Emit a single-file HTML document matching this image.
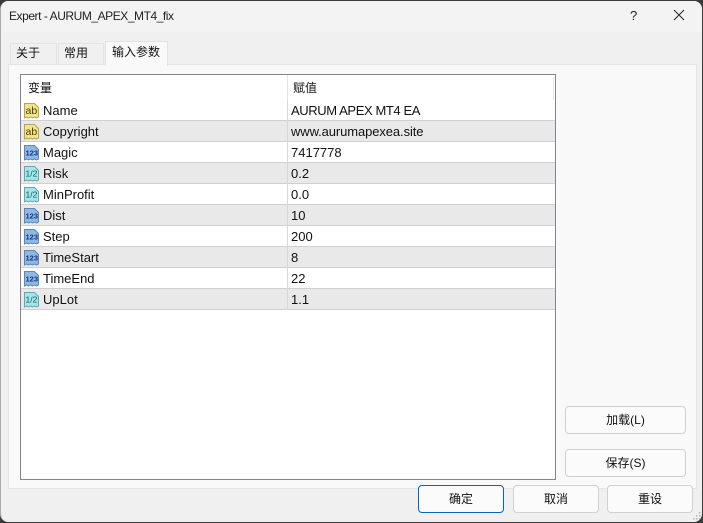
<!DOCTYPE html>
<html><head><meta charset="utf-8"><style>
html,body{margin:0;padding:0;width:703px;height:523px;overflow:hidden;background:#3a3a3a}
*{box-sizing:border-box}
body{font-family:"Liberation Sans","Noto Sans CJK SC",sans-serif;font-size:13px;color:#111;position:relative}
.abs,.win,.tab,.panel,.list,.btn,.row,.t{position:absolute}
.win{left:0;top:1px;width:702px;height:521px;background:#f0f0f0;border-radius:8px;overflow:hidden;border-left:1px solid #aaa}
.title{position:absolute;left:0;top:0;width:702px;height:31px;background:#f3f3f3}
.tab{background:#f0f0f0;border:1px solid #e3e3e3;border-bottom:none;text-align:left;font-size:12px}
.panel{left:8px;top:64px;width:689px;height:425px;background:#f9f9f9;border:1px solid #e5e5e5}
.list{left:20px;top:74px;width:536px;height:406px;background:#fff;border:1px solid #82858f;overflow:hidden}
.row{left:0;width:534px;height:21px;border-bottom:1px solid #d0d0d0;line-height:20px}
.g{background:#e9e9e9}
.row b{font-weight:normal;position:absolute;left:22px;top:1px;font-size:13px}
.row i{font-style:normal;position:absolute;left:270px;top:1px;font-size:13px}
.row u{position:absolute;left:266px;top:0;width:1px;height:21px;background:#d8d8d8}
.row svg{position:absolute;left:2px;top:2px}
.btn{background:#fbfbfb;border:1px solid #d0d0d0;border-radius:4px;text-align:center;font-size:12px;line-height:26px;height:28px}
</style></head><body>
<div style="position:absolute;left:0;top:55px;width:2px;height:9px;background:#35c635"></div>
<div style="position:absolute;left:0;top:70px;width:2px;height:13px;background:#35c635"></div>
<div class="win">
<div class="title"></div>
</div>
<div class="t" style="left:9px;top:9px;font-size:12px;color:#222;letter-spacing:-.45px;white-space:nowrap">Expert - AURUM_APEX_MT4_fix</div>
<svg class="abs" style="left:625px;top:5px" width="70" height="20"><text x="5" y="15" font-family="Liberation Sans" font-size="13" fill="#222">?</text><path d="M49 5l10 10M59 5l-10 10" stroke="#222" stroke-width="1" fill="none"/></svg>

<div class="tab" style="left:10px;top:43px;width:47px;height:22px;line-height:19px;padding-left:5px">关于</div>
<div class="tab" style="left:58px;top:43px;width:46px;height:22px;line-height:19px;padding-left:5px">常用</div>
<div class="panel"></div>
<div class="tab" style="left:105px;top:41px;width:63px;height:25px;line-height:20px;padding-left:6px;background:#f9f9f9;z-index:2">输入参数</div>

<div class="list">
<div class="abs" style="left:7px;top:4px;font-size:12px">变量</div>
<div class="abs" style="left:272px;top:4px;font-size:12px">赋值</div>
<div class="abs" style="left:266px;top:0;width:1px;height:25px;background:#e5e5e5"></div>
<div class="abs" style="left:532px;top:2px;width:1px;height:23px;background:#e5e5e5"></div>

<div class="row" style="top:25px"><svg width="17" height="17"><path d="M1.5 1.5h10l4 4v9.500l-2 1-2-1-2 1-2-1-2 1-2-1-2 1z" fill="#f0e48c" stroke="#b5a550"/><text x="2.500" y="12" font-family="Liberation Sans" font-size="10.500" fill="#4a3c08">ab</text></svg><b>Name</b><u></u><i style="letter-spacing:-.4px">AURUM APEX MT4 EA</i></div>
<div class="row g" style="top:46px"><svg width="17" height="17"><path d="M1.5 1.5h10l4 4v9.500l-2 1-2-1-2 1-2-1-2 1-2-1-2 1z" fill="#f0e48c" stroke="#b5a550"/><text x="2.500" y="12" font-family="Liberation Sans" font-size="10.500" fill="#4a3c08">ab</text></svg><b>Copyright</b><u></u><i style="letter-spacing:-.1px">www.aurumapexea.site</i></div>
<div class="row" style="top:67px"><svg width="17" height="17"><path d="M1.5 1.5h10l4 4v9.500l-2 1-2-1-2 1-2-1-2 1-2-1-2 1z" fill="#90b8e6" stroke="#5d85b8"/><text x="2.500" y="11.500" font-family="Liberation Sans" font-size="7.500" font-weight="bold" fill="#0e3a78">123</text></svg><b>Magic</b><u></u><i>7417778</i></div>
<div class="row g" style="top:88px"><svg width="17" height="17"><path d="M1.5 1.5h10l4 4v9.500l-2 1-2-1-2 1-2-1-2 1-2-1-2 1z" fill="#a5e6e8" stroke="#5faab0"/><text x="2.500" y="11.500" font-family="Liberation Sans" font-size="8.500" fill="#0e5a68">1/2</text></svg><b>Risk</b><u></u><i>0.2</i></div>
<div class="row" style="top:109px"><svg width="17" height="17"><path d="M1.5 1.5h10l4 4v9.500l-2 1-2-1-2 1-2-1-2 1-2-1-2 1z" fill="#a5e6e8" stroke="#5faab0"/><text x="2.500" y="11.500" font-family="Liberation Sans" font-size="8.500" fill="#0e5a68">1/2</text></svg><b>MinProfit</b><u></u><i>0.0</i></div>
<div class="row g" style="top:130px"><svg width="17" height="17"><path d="M1.5 1.5h10l4 4v9.500l-2 1-2-1-2 1-2-1-2 1-2-1-2 1z" fill="#90b8e6" stroke="#5d85b8"/><text x="2.500" y="11.500" font-family="Liberation Sans" font-size="7.500" font-weight="bold" fill="#0e3a78">123</text></svg><b>Dist</b><u></u><i>10</i></div>
<div class="row" style="top:151px"><svg width="17" height="17"><path d="M1.5 1.5h10l4 4v9.500l-2 1-2-1-2 1-2-1-2 1-2-1-2 1z" fill="#90b8e6" stroke="#5d85b8"/><text x="2.500" y="11.500" font-family="Liberation Sans" font-size="7.500" font-weight="bold" fill="#0e3a78">123</text></svg><b>Step</b><u></u><i>200</i></div>
<div class="row g" style="top:172px"><svg width="17" height="17"><path d="M1.5 1.5h10l4 4v9.500l-2 1-2-1-2 1-2-1-2 1-2-1-2 1z" fill="#90b8e6" stroke="#5d85b8"/><text x="2.500" y="11.500" font-family="Liberation Sans" font-size="7.500" font-weight="bold" fill="#0e3a78">123</text></svg><b>TimeStart</b><u></u><i>8</i></div>
<div class="row" style="top:193px"><svg width="17" height="17"><path d="M1.5 1.5h10l4 4v9.500l-2 1-2-1-2 1-2-1-2 1-2-1-2 1z" fill="#90b8e6" stroke="#5d85b8"/><text x="2.500" y="11.500" font-family="Liberation Sans" font-size="7.500" font-weight="bold" fill="#0e3a78">123</text></svg><b>TimeEnd</b><u></u><i>22</i></div>
<div class="row g" style="top:214px"><svg width="17" height="17"><path d="M1.5 1.5h10l4 4v9.500l-2 1-2-1-2 1-2-1-2 1-2-1-2 1z" fill="#a5e6e8" stroke="#5faab0"/><text x="2.500" y="11.500" font-family="Liberation Sans" font-size="8.500" fill="#0e5a68">1/2</text></svg><b>UpLot</b><u></u><i>1.1</i></div>
</div>

<div class="btn" style="left:565px;top:406px;width:121px">加载(L)</div>
<div class="btn" style="left:565px;top:449px;width:121px">保存(S)</div>
<div class="btn" style="left:418px;top:485px;width:86px;border-color:#0067c0">确定</div>
<div class="btn" style="left:513px;top:485px;width:86px">取消</div>
<div class="btn" style="left:607px;top:485px;width:86px">重设</div>
<svg class="abs" style="left:693px;top:511px" width="9" height="9"><path d="M6 1h1.500v1.500H6zM3 4h1.500v1.500H3zM6 4h1.500v1.500H6zM0 7h1.500v1.500H0zM3 7h1.500v1.500H3zM6 7h1.500v1.500H6z" fill="#b8b8b8"/></svg>
</body></html>
